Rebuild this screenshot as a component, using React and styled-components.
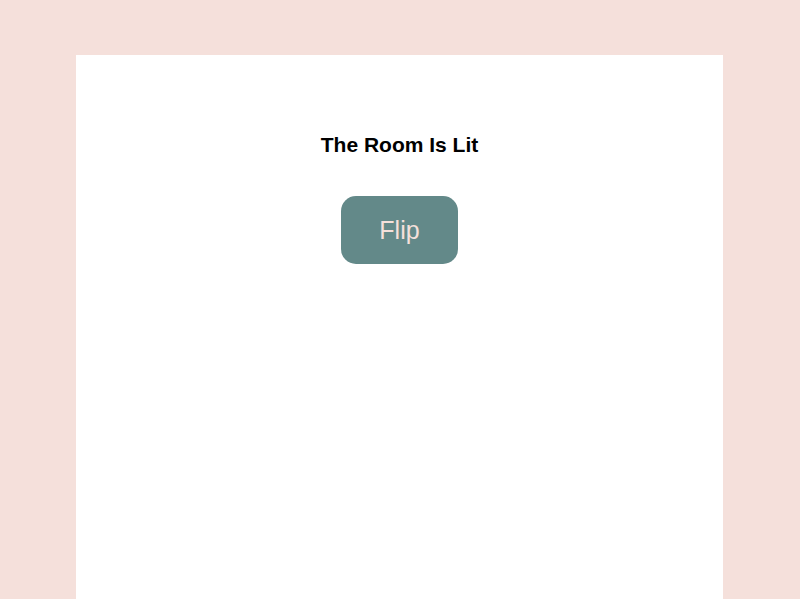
import React from "react";
import styled, { createGlobalStyle } from "styled-components";

const Global = createGlobalStyle`
  html, body { margin: 0; padding: 0; background: #f5e0db; }
  body { font-family: "Liberation Sans", Arial, sans-serif; }
`;

const Page = styled.div`
  min-height: 599px;
  padding-top: 55px;
  box-sizing: border-box;
  display: flex;
  justify-content: center;
`;

const Panel = styled.main`
  width: 647px;
  min-height: 544px;
  margin-left: -1px;
  background: #ffffff;
  display: flex;
  flex-direction: column;
  align-items: center;
  padding-top: 78px;
  box-sizing: border-box;
`;

const Title = styled.h1`
  margin: 0;
  font-size: 21px;
  font-weight: bold;
  color: #000;
  line-height: 24px;
`;

const FlipButton = styled.button`
  margin-top: 39px;
  width: 117px;
  height: 68px;
  border: none;
  border-radius: 15px;
  background: #638989;
  color: #f5e0db;
  font-family: "Liberation Sans", Arial, sans-serif;
  font-size: 25px;
  cursor: pointer;
`;

export default function App() {
  return (
    <>
      <Global />
      <Page>
        <Panel>
          <Title>The Room Is Lit</Title>
          <FlipButton>Flip</FlipButton>
        </Panel>
      </Page>
    </>
  );
}
